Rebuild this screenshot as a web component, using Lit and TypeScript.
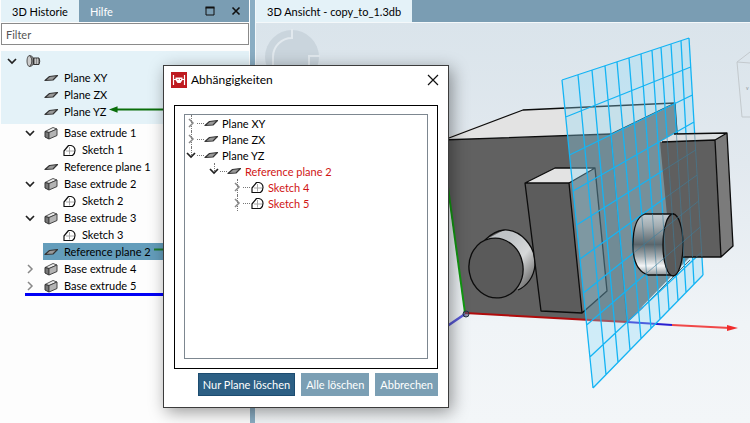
import { LitElement, html, svg, css, nothing } from 'lit';
import { customElement, property } from 'lit/decorators.js';
import { classMap } from 'lit/directives/class-map.js';
import { styleMap } from 'lit/directives/style-map.js';

type Kind = 'part' | 'plane' | 'extrude' | 'sketch';

interface TreeNode {
    kind: Kind;
    label: string;
    level: number;
    open?: boolean;
    selected?: boolean;
    link?: 'arrow' | 'line';
}

const ORIGIN_NODES: TreeNode[] = [
    { kind: 'part', label: '', level: 0, open: true },
    { kind: 'plane', label: 'Plane XY', level: 1 },
    { kind: 'plane', label: 'Plane ZX', level: 1 },
    { kind: 'plane', label: 'Plane YZ', level: 1, link: 'arrow' },
];

const FEATURE_NODES: TreeNode[] = [
    { kind: 'extrude', label: 'Base extrude 1', level: 1, open: true },
    { kind: 'sketch', label: 'Sketch 1', level: 2 },
    { kind: 'plane', label: 'Reference plane 1', level: 1 },
    { kind: 'extrude', label: 'Base extrude 2', level: 1, open: true },
    { kind: 'sketch', label: 'Sketch 2', level: 2 },
    { kind: 'extrude', label: 'Base extrude 3', level: 1, open: true },
    { kind: 'sketch', label: 'Sketch 3', level: 2 },
    { kind: 'plane', label: 'Reference plane 2', level: 1, selected: true, link: 'line' },
    { kind: 'extrude', label: 'Base extrude 4', level: 1, open: false },
    { kind: 'extrude', label: 'Base extrude 5', level: 1, open: false },
];

const DEPENDENCIES: TreeNode[] = [
    { kind: 'plane', label: 'Plane XY', level: 0, open: false },
    { kind: 'plane', label: 'Plane ZX', level: 0, open: false },
    { kind: 'plane', label: 'Plane YZ', level: 0, open: true },
    { kind: 'plane', label: 'Reference plane 2', level: 1, open: true },
    { kind: 'sketch', label: 'Sketch 4', level: 2, open: false },
    { kind: 'sketch', label: 'Sketch 5', level: 2, open: false },
];

const icons = {
    part: svg`
        <ellipse cx="3.500" cy="7" rx="2.500" ry="5.500" fill="#ccc" stroke="#555"/>
        <path d="M3.500 1.500 Q8 2 8 7 Q8 12 3.500 12.500 Q6 10 6 7 Q6 4 3.500 1.500 Z" fill="#888" stroke="#444" stroke-width=".8"/>
        <path d="M7.500 4 H13 Q14.500 7 13 10.500 H7.500 Z" fill="#8a8a8a" stroke="#333"/>
        <path d="M9.500 4.500 V10 M11.500 4.500 V10" stroke="#ddd" stroke-width=".7"/>`,
    plane: svg`<path d="M1 9.500 L5.500 5.500 L13.500 4.500 L9 9 Z" fill="#999" stroke="#333" stroke-width="1.200" stroke-linejoin="round"/>`,
    extrude: svg`
        <path d="M1 5.500 L9 1.500 L13 3 L5 6.500 Z" fill="#eee" stroke="#555" stroke-linejoin="round"/>
        <path d="M1 5.500 L5 6.500 V13 L1 11 Z" fill="#777" stroke="#333" stroke-linejoin="round"/>
        <path d="M5 6.500 L13 3 V9.500 L5 13 Z" fill="#b4b4b4" stroke="#444" stroke-linejoin="round"/>`,
    sketch: svg`
        <path d="M2 12.500 V8 L6.500 2.500 H9 Q13 3.500 13 7.500 Q13 10.500 10.500 12.500 Z" fill="#fff" stroke="#111" stroke-width="1.200" stroke-linejoin="round"/>
        <path d="M7.500 4 V11.500 M4 8 H12" stroke="#aaa"/>`,
};

const icon = (kind: Kind) => html`<svg class="icon" width="15" height="14" viewBox="0 0 15 14" fill="none">${icons[kind]}</svg>`;

const toggle = (node: TreeNode) => node.open === undefined ? html`<span class="toggle"></span>` : html`
    <button class="toggle" aria-label=${node.open ? 'Zuklappen' : 'Aufklappen'}>
        <svg width="10" height="10" viewBox="0 0 10 10" fill="none">
            ${node.open
                ? svg`<path d="M1 3 L5 7 L9 3" stroke="#222" stroke-width="1.700"/>`
                : svg`<path d="M3 1 L7 5 L3 9" stroke="#888" stroke-width="1.500"/>`}
        </svg>
    </button>`;

const base = css`
    button {
        font: inherit;
        border: 0;
        margin: 0;
        padding: 0;
        background: none;
    }

    svg {
        display: block;
        flex: none;
    }

    .row {
        display: flex;
        align-items: center;
        white-space: nowrap;
    }

    .toggle {
        display: flex;
        justify-content: center;
        flex: none;
    }
`;

@customElement('history-panel')
export class HistoryPanel extends LitElement {
    static styles = [
        base,
        css`
            :host {
                display: block;
                min-width: 0;
                overflow: hidden;
                background: #fdfdfd;
                padding: 0 1px;
            }

            .tabs {
                display: flex;
                align-items: center;
                height: 22px;
                margin-bottom: 1px;
                background: #7a9db3;
            }

            .tab {
                height: 22px;
                padding: 0 11px;
                color: #fff;
            }

            .tab.active {
                background: #e4f2f8;
                color: #000;
            }

            .tool {
                margin-right: 16px;
            }

            .tool:last-child {
                margin-right: 8px;
            }

            .spacer {
                flex: 1;
            }

            .filter {
                display: block;
                box-sizing: border-box;
                width: 100%;
                height: 22px;
                padding: 0 4px;
                border: 1px solid #8a8a8a;
                border-radius: 0;
                font: inherit;
                background: #fff;
            }

            .filter::placeholder {
                color: #555;
                opacity: 1;
            }

            .origin {
                margin-top: 6px;
                padding: 1px 0 4px;
                background: #e4f2f8;
            }

            .row {
                height: 17px;
                gap: 4px;
            }

            .toggle {
                width: 18px;
            }

            .label {
                display: flex;
                align-items: center;
                flex: 1;
                height: 17px;
                gap: 5px;
                padding-left: 1px;
            }

            .label.selected {
                background: #649dbb;
            }

            .link {
                flex: 1;
                height: 9px;
                min-width: 0;
                margin: 0 0 4px -2px;
            }

            .marker {
                height: 3px;
                margin: -1px 0 0 24px;
                background: #0000f5;
            }
        `
    ];

    render() {
        return html`
            <div class="tabs">
                <button class="tab active">3D Historie</button>
                <button class="tab">Hilfe</button>
                <span class="spacer"></span>
                <button class="tool" aria-label="Maximieren">
                    <svg width="10" height="10" viewBox="0 0 10 10"><path d="M1 1.500 H9 V9 H1 Z" fill="none" stroke="#111"/><path d="M.5 1.500 H9.500" stroke="#111" stroke-width="2"/></svg>
                </button>
                <button class="tool" aria-label="Schließen">
                    <svg width="10" height="10" viewBox="0 0 10 10"><path d="M1.500 1.500 L8.500 8.500 M8.500 1.500 L1.500 8.500" stroke="#111" stroke-width="1.600"/></svg>
                </button>
            </div>
            <input class="filter" aria-label="Filter" placeholder="Filter">
            <div class="origin">${ORIGIN_NODES.map(n => this.#row(n))}</div>
            <div class="features">${FEATURE_NODES.map(n => this.#row(n))}</div>
            <div class="marker"></div>`;
    }

    #row(node: TreeNode) {
        return html`
            <div class="row" style=${styleMap({ paddingLeft: `${2 + node.level * 18}px` })}>
                ${toggle(node)}
                <div class=${classMap({ label: true, selected: !!node.selected })}>
                    ${icon(node.kind)}<span>${node.label}</span>${this.#link(node)}
                </div>
            </div>`;
    }

    #link(node: TreeNode) {
        if (!node.link) {
            return nothing;
        }
        return html`
            <svg class="link" viewBox="0 0 130 9" preserveAspectRatio="xMinYMid slice">
                ${node.link === 'arrow'
                    ? svg`<path d="M6 4.500 H130" stroke="#0a6e0a" stroke-width="2"/><path d="M0 4.500 L8 1.500 V7.500 Z" fill="#0a6e0a"/>`
                    : svg`<path d="M0 4.500 H130" stroke="#1f7a2c" stroke-width="2"/>`}
            </svg>`;
    }
}

// Corner coordinates of the reference plane, one entry per grid line
const COLS_TOP = [562, 578, 592, 605, 617, 629, 641, 652, 661, 671, 681, 689];
const COLS_BOTTOM = [593, 606, 618, 630, 641, 651, 660, 669, 678, 686, 694, 703];
const ROWS_LEFT = [80, 117, 155, 191, 225, 259, 293, 325, 357, 388];
const ROWS_RIGHT = [38, 67, 95, 122, 150, 175, 201, 227, 252, 275];

const mix = (v: number, a0: number, a1: number, b0: number, b1: number) => b0 + (v - a0) / (a1 - a0) * (b1 - b0);

const GRID = [
    ...COLS_TOP.map((x, i) => {
        const x2 = COLS_BOTTOM[i];
        return `M${x} ${mix(x, 562, 689, 80, 38)} L${x2} ${mix(x2, 593, 703, 388, 275)}`;
    }),
    ...ROWS_LEFT.map((y, i) => {
        const y2 = ROWS_RIGHT[i];
        return `M${mix(y, 80, 388, 562, 593)} ${y} L${mix(y2, 38, 275, 689, 703)} ${y2}`;
    }),
].join(' ');

@customElement('model-view')
export class ModelView extends LitElement {
    @property() name = '';

    static styles = [
        base,
        css`
            :host {
                display: flex;
                flex-direction: column;
                min-width: 0;
                overflow: hidden;
            }

            .tabs {
                display: flex;
                height: 22px;
                border-bottom: 1px solid #f4f8fa;
                background: #7a9db3;
            }

            .tab {
                padding: 0 11px;
                background: #e4f2f8;
                color: #000;
            }

            .canvas {
                flex: 1;
                min-height: 400px;
                background: linear-gradient(#dae4eb, #e2e9ef 35%, #f0f4f7 75%, #f3f6f8);
            }

            .scene {
                width: 100%;
                height: 400px;
            }

            .edge {
                fill: none;
                stroke: #0c0c0c;
                stroke-width: 1.3;
                stroke-linejoin: round;
            }

            .edge.cap {
                fill: #5a5a5a;
            }

            .grid {
                fill: none;
                stroke: #14b4f4;
                stroke-width: 1.3;
            }

            .grid.hidden {
                stroke: #3d7f9c;
                stroke-width: 1;
                opacity: 0.6;
            }
        `
    ];

    render() {
        return html`
            <div class="tabs"><button class="tab">${this.name}</button></div>
            <div class="canvas">
                <svg class="scene" viewBox="256 23 494 400" preserveAspectRatio="xMinYMin slice">
                    <defs>
                        <linearGradient id="roundA" x1="0" y1="0" x2="1" y2="1">
                            <stop offset=".3" stop-color="#bfc3c6"/>
                            <stop offset=".6" stop-color="#d6d8d9"/>
                            <stop offset=".85" stop-color="#7e7e7e"/>
                        </linearGradient>
                        <linearGradient id="roundB" x1="0" y1="0" x2="0" y2="1">
                            <stop offset="0" stop-color="#c3cdd2"/>
                            <stop offset=".2" stop-color="#a3adb2"/>
                            <stop offset=".5" stop-color="#5a666c"/>
                            <stop offset=".7" stop-color="#a8b0b4"/>
                            <stop offset=".85" stop-color="#f4f6f7"/>
                            <stop offset="1" stop-color="#8b9499"/>
                        </linearGradient>
                        <clipPath id="front">
                            <path d="M660 142 L674 134 L727 133 L733 246 L721 257 L683 257 L674 276 H645 Q633 268 633 245 Q633 218 645 214 H667 Z"/>
                        </clipPath>
                    </defs>
                    ${this.#overlays()}
                    ${this.#axes()}
                    ${this.#body()}
                    <path d="M562 80 L689 38 L703 275 L593 388 Z" fill="#8fdcf8" fill-opacity=".34"/>
                    <path class="grid" d=${GRID}/>
                    ${this.#frontParts()}
                    <path class="grid hidden" clip-path="url(#front)" d=${GRID}/>
                </svg>
            </div>`;
    }

    #overlays() {
        return svg`
            <circle cx="292" cy="57" r="27" fill="#cad5dd"/>
            <path d="M292 29 V38 A19 19 0 0 0 273 57 V66 M320 56 H309 V66" fill="none" stroke="#e2e9ee" stroke-width="2"/>
            <path d="M750 52 L737 62 L742 117 H750 M737 62 L750 63" fill="none" stroke="#c3c9cd"/>
            <text x="746" y="90" font-size="5" fill="#8f959a">v</text>`;
    }

    #axes() {
        return svg`
            <path d="M672 325 L730 328" stroke="#f04848" stroke-width="2"/>
            <path d="M727 325 L738 328 L727 331 Z" fill="#f02c2c"/>
            <path d="M440 331 L465 314" stroke="#5a5ad8" stroke-width="2.500"/>`;
    }

    #body() {
        return svg`
            <path d="M441 139 L523 110 L675 103 L611 134 Z" fill="#e3e3e3"/>
            <path d="M441 140 L611 134 L627 322 L465 313 Z" fill="#616161"/>
            <path d="M611 134 L675 103 L690 257 L627 322 Z" fill="#696969"/>
            <path class="edge" d="M441 141 L523 110 L675 103 L611 134 L441 140 M675 103 L677 134"/>
            <path d="M611 134 L627 322" fill="none" stroke="#2f4a56"/>
            <path d="M643 307 L690 260" stroke="#333"/>

            <path d="M485 240 L504 230 C520 229 536 246 535 265 C534 277 527 286 518 290 L500 260 Z" fill="url(#roundA)"/>
            <path class="edge" d="M485 240 Q494 231 504 230 C520 229 536 246 535 265 C534 277 527 286 518 290"/>
            <ellipse class="edge cap" cx="496" cy="268" rx="27" ry="30" transform="rotate(-10 496 268)"/>

            <path d="M525 183 L555 168 L595 168 L569 183 Z" fill="#e3e3e3"/>
            <path d="M525 183 L569 183 L582 313 L541 311 Z" fill="#5c5c5c"/>
            <path d="M569 183 L595 168 L607 291 L582 313 Z" fill="#757575"/>
            <path class="edge" d="M525 183 L555 168 L595 168 L569 183 Z L541 311 L582 313 L569 183 M595 168 L607 291 L582 313"/>

            <path d="M440 128 L465 313" stroke="#129a12" stroke-width="2"/>
            <path d="M465 313 L627 322" stroke="#b00c0c" stroke-width="2"/>
            <path d="M627 322 L643 307" stroke="#c01010" stroke-width="1.500"/>
            <path d="M627 322 L672 325" stroke="#2a1ed0" stroke-width="2"/>
            <circle cx="466" cy="314" r="3" fill="#557" fill-opacity=".6" stroke="#234"/>`;
    }

    #frontParts() {
        return svg`
            <path d="M660 142 L674 134 L727 133 L715 140 Z" fill="#dcdfe1"/>
            <path d="M660 142 L715 140 L721 257 L683 257 L667 215 Z" fill="#5f5f5f"/>
            <path d="M715 140 L727 133 L733 246 L721 257 Z" fill="#7b7b7b"/>
            <path class="edge" d="M662 142 L715 140 L727 133 L674 134 M715 140 L721 257 L683 257 M727 133 L733 246 L721 257"/>

            <path d="M674 214 H645 Q633 218 633 245 Q633 270 648 275 H674 Z" fill="url(#roundB)"/>
            <path class="edge" d="M674 214 H645 Q633 218 633 245 Q633 270 648 275 H674"/>
            <ellipse class="edge cap" cx="673" cy="245" rx="10" ry="31"/>`;
    }
}

@customElement('dependency-dialog')
export class DependencyDialog extends LitElement {
    static styles = [
        base,
        css`
            :host {
                display: block;
                box-sizing: border-box;
                width: 286px;
                padding: 0 10px 11px;
                border: 1px solid #3c3c3c;
                background: #fff;
                box-shadow: 3px 4px 16px rgba(0, 0, 0, 0.4);
            }

            .title {
                display: flex;
                align-items: center;
                gap: 4px;
                height: 27px;
                margin: 0 -3px 12px;
                font-size: 12px;
            }

            .title span {
                flex: 1;
            }

            .close {
                margin-right: 2px;
            }

            .frame {
                padding: 8px 9px 9px;
                border: 1px solid #000;
            }

            .list {
                min-height: 243px;
                border: 1px solid #7d8790;
            }

            .row {
                height: 16px;
            }

            .toggle {
                width: 12px;
            }

            .dots {
                width: 7px;
                border-top: 1px dotted #777;
            }

            .row .icon {
                margin-right: 3px;
            }

            .guide {
                align-self: stretch;
                margin-right: -7px;
                width: 6px;
                border-right: 1px dotted #777;
            }

            .guide.last {
                height: 8px;
            }

            .dependent {
                color: #d01414;
            }

            .actions {
                display: flex;
                justify-content: flex-end;
                gap: 6px;
                margin-top: 4px;
            }

            .action {
                height: 23px;
                padding: 0 5px;
                background: #7b9fb4;
                color: #fff;
            }

            .action.primary {
                background: #2c5f84;
                box-shadow: inset 0 0 0 1px #1c4c70;
            }
        `
    ];

    render() {
        return html`
            <div class="title">
                <svg width="16" height="16" viewBox="0 0 16 16">
                    <path d="M0 0 H16 V16 H0 Z" fill="#bf1a20"/>
                    <path d="M2.500 3 V13 M13.500 3 V13 M2.500 7.500 H5 M11 7.500 H13.500" stroke="#fff" stroke-width="1.200"/>
                    <path d="M4.500 5.500 H11.500 V8 L9.500 11 H6.500 L4.500 8 Z" fill="#fff"/>
                    <path d="M6.500 7.500 H7.500 M9 7.500 H10" stroke="#bf1a20"/>
                </svg>
                <span>Abhängigkeiten</span>
                <button class="close" aria-label="Schließen">
                    <svg width="12" height="12" viewBox="0 0 12 12"><path d="M1 1 L11 11 M11 1 L1 11" stroke="#111" stroke-width="1.200"/></svg>
                </button>
            </div>
            <div class="frame">
                <div class="list">${DEPENDENCIES.map(n => this.#row(n))}</div>
            </div>
            <div class="actions">
                <button class="action primary">Nur Plane löschen</button>
                <button class="action">Alle löschen</button>
                <button class="action">Abbrechen</button>
            </div>`;
    }

    #row(node: TreeNode) {
        return html`
            <div class=${classMap({ row: true, dependent: node.level > 0 })}
                style=${styleMap({ paddingLeft: `${node.level * 23}px` })}>
                <span class=${classMap({ guide: true, last: !!node.open })}></span>
                ${toggle(node)}<span class="dots"></span>${icon(node.kind)}<span>${node.label}</span>
            </div>`;
    }
}

@customElement('app-root')
export class AppRoot extends LitElement {
    static styles = css`
        :host {
            display: grid;
            grid-template-columns: 250px 6px 1fr;
            position: relative;
            min-height: 100vh;
            overflow: hidden;
            font-family: Lato, 'Open Sans', sans-serif;
            font-size: 11px;
            color: #000;
        }

        .splitter {
            box-sizing: border-box;
            border-right: 1px solid #f4f8fa;
            background: #8aadc3;
        }

        .window {
            position: absolute;
            left: 163px;
            top: 65px;
        }
    `;

    render() {
        return html`
            <history-panel></history-panel>
            <div class="splitter"></div>
            <model-view name="3D Ansicht - copy_to_1.3db"></model-view>
            <dependency-dialog class="window" role="dialog" aria-label="Abhängigkeiten"></dependency-dialog>`;
    }
}
